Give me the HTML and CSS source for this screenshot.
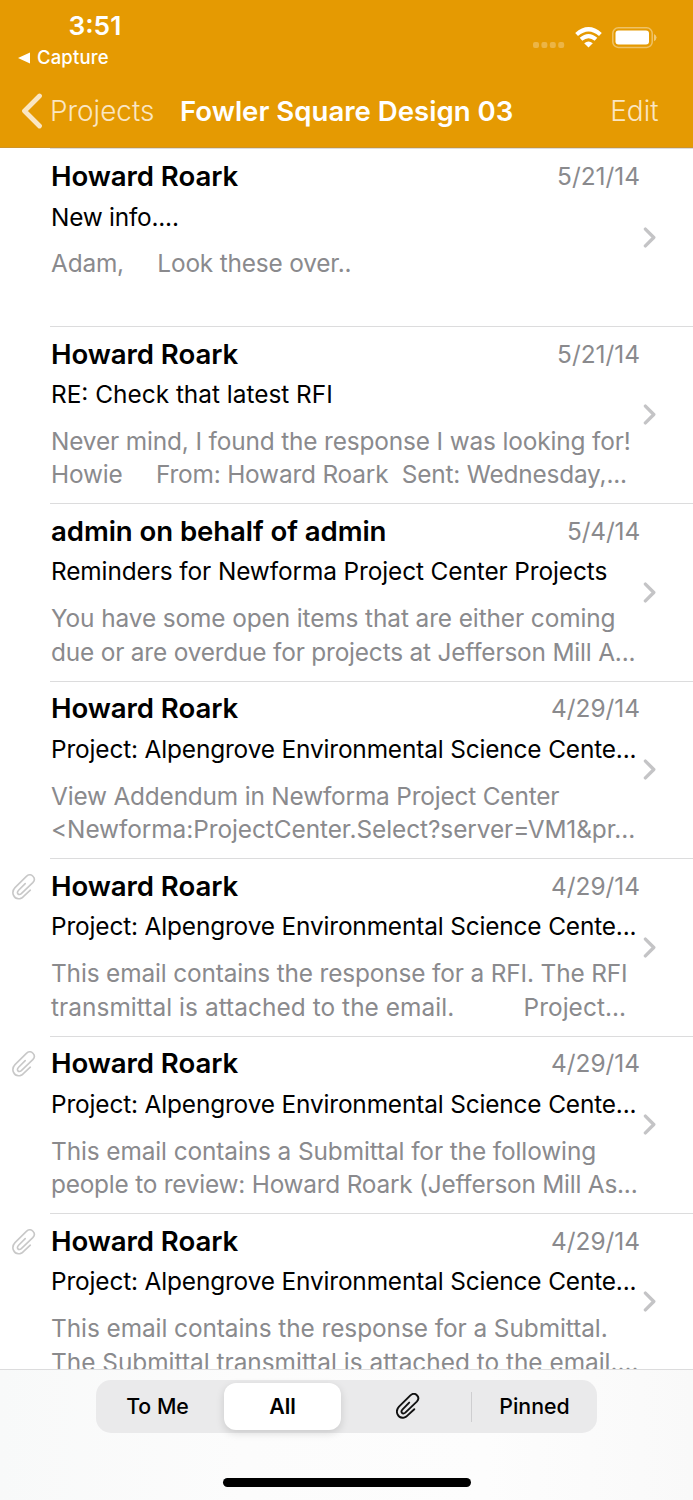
FILE: index.html
```
<!DOCTYPE html>
<html lang="en">
<head>
<meta charset="utf-8">
<title>Fowler Square Design 03</title>
<link rel="stylesheet" href="styles.css">
</head>
<body>
<svg width="0" height="0" class="defs">
  <symbol id="clip" viewBox="0 0 24 27"><path d="M13.200 9.600 6.600 16.300C4 19 6.600 22 9.300 19.600L20.800 8.600C25 4 19-1.800 14.400 2.400L3 13.600C-1.500 18.500 2 25.800 8 24.600 10 24.100 10.600 23.400 11.600 22.400L18.300 16.200" fill="none" stroke="currentColor" stroke-linecap="round" stroke-linejoin="round"/></symbol>
  <symbol id="chev" viewBox="0 0 13 22"><path d="M2.200 2.200 11 11 2.200 19.800" fill="none" stroke="currentColor" stroke-width="3.500" stroke-linecap="round" stroke-linejoin="round"/></symbol>
</svg>
<div class="phone">
  <header class="header">
    <div class="status">
      <div class="status-left">
        <div class="time">3:51</div>
        <div class="return"><svg width="12" height="12" viewBox="0 0 12 12"><path d="M0 6 12 .5v11z" fill="#fff"/></svg><span>Capture</span></div>
      </div>
      <div class="status-right">
        <svg class="cell" width="32" height="6" viewBox="0 0 32 6" fill="#fff" fill-opacity=".27"><rect width="6" height="6" rx="2"/><rect x="8.400" width="6" height="6" rx="2"/><rect x="16.800" width="6" height="6" rx="2"/><rect x="25.200" width="6" height="6" rx="2"/></svg>
        <svg class="wifi" width="27" height="21" viewBox="0 0 27 21"><path d="M1.600 7.500Q13.500-3 25.400 7.500" fill="none" stroke="#fff" stroke-width="4.200"/><path d="M6 12.300Q13.500 5.800 21 12.300" fill="none" stroke="#fff" stroke-width="4"/><path d="M13.500 20.600 9.200 16.300Q13.500 12.900 17.800 16.300Z" fill="#fff"/></svg>
        <svg class="battery" width="45" height="22" viewBox="0 0 45 22"><rect x=".8" y=".8" width="39.400" height="19.600" rx="5.500" fill="none" stroke="#fff" stroke-opacity=".4" stroke-width="1.500"/><rect x="3.500" y="3.500" width="33.500" height="14" rx="3" fill="#fff"/><path d="M42 7q2.500 1.200 2.500 3.600T42 14.200z" fill="#fff" fill-opacity=".45"/></svg>
      </div>
    </div>
    <nav class="nav">
      <svg class="back" width="22" height="36" viewBox="0 0 22 36"><path d="M18.500 3 3.500 18 18.500 33" fill="none" stroke="#fae6c3" stroke-width="4.800" stroke-linecap="round" stroke-linejoin="round"/></svg>
      <span class="nav-link projects">Projects</span>
      <h1 class="title">Fowler Square Design 03</h1>
      <span class="nav-link edit">Edit</span>
    </nav>
  </header>
  <main class="list">
    <article class="row"><div class="gutter"></div><div class="body"><div class="top"><h2 class="name">Howard Roark</h2><time class="date">5/21/14</time></div><p class="subject snug-5">New info....</p><p class="preview"><span class="snug-4">Adam,     Look these over..</span></p></div><svg class="chev"><use href="#chev"/></svg></article>
    <article class="row"><div class="gutter"></div><div class="body"><div class="top"><h2 class="name">Howard Roark</h2><time class="date">5/21/14</time></div><p class="subject">RE: Check that latest RFI</p><p class="preview"><span class="snug-3">Never mind, I found the response I was looking for!</span><span class="snug-4">Howie     From: Howard Roark  Sent: Wednesday,...</span></p></div><svg class="chev"><use href="#chev"/></svg></article>
    <article class="row"><div class="gutter"></div><div class="body"><div class="top"><h2 class="name">admin on behalf of admin</h2><time class="date short">5/4/14</time></div><p class="subject snug-2">Reminders for Newforma Project Center Projects</p><p class="preview"><span class="snug-2">You have some open items that are either coming</span><span class="snug-4">due or are overdue for projects at Jefferson Mill A...</span></p></div><svg class="chev"><use href="#chev"/></svg></article>
    <article class="row"><div class="gutter"></div><div class="body"><div class="top"><h2 class="name">Howard Roark</h2><time class="date">4/29/14</time></div><p class="subject snug-3">Project: Alpengrove Environmental Science Cente...</p><p class="preview"><span class="snug-4">View Addendum in Newforma Project Center</span><span class="snug-1">&lt;Newforma:ProjectCenter.Select?server=VM1&amp;pr...</span></p></div><svg class="chev"><use href="#chev"/></svg></article>
    <article class="row"><div class="gutter"><svg class="clip"><use href="#clip"/></svg></div><div class="body"><div class="top"><h2 class="name">Howard Roark</h2><time class="date">4/29/14</time></div><p class="subject snug-3">Project: Alpengrove Environmental Science Cente...</p><p class="preview"><span class="snug-3">This email contains the response for a RFI. The RFI</span><span class="loose">transmittal is attached to the email.          Project...</span></p></div><svg class="chev"><use href="#chev"/></svg></article>
    <article class="row"><div class="gutter"><svg class="clip"><use href="#clip"/></svg></div><div class="body"><div class="top"><h2 class="name">Howard Roark</h2><time class="date">4/29/14</time></div><p class="subject snug-3">Project: Alpengrove Environmental Science Cente...</p><p class="preview"><span class="snug-2">This email contains a Submittal for the following</span><span class="snug-5">people to review: Howard Roark (Jefferson Mill As...</span></p></div><svg class="chev"><use href="#chev"/></svg></article>
    <article class="row"><div class="gutter"><svg class="clip"><use href="#clip"/></svg></div><div class="body"><div class="top"><h2 class="name">Howard Roark</h2><time class="date">4/29/14</time></div><p class="subject snug-3">Project: Alpengrove Environmental Science Cente...</p><p class="preview"><span class="snug-1">This email contains the response for a Submittal.</span><span>The Submittal transmittal is attached to the email....</span></p></div><svg class="chev"><use href="#chev"/></svg></article>
  </main>
  <footer class="toolbar">
    <div class="segments">
      <button class="segment first">To Me</button>
      <button class="segment active">All</button>
      <button class="segment" aria-label="Attachments"><svg class="clip dark"><use href="#clip"/></svg></button>
      <button class="segment divided">Pinned</button>
    </div>
    <div class="home"></div>
  </footer>
</div>
</body>
</html>
```
FILE: styles.css
```
* { box-sizing: border-box; }
body { margin: 0; background: #fff; font-family: Inter, "Liberation Sans", sans-serif; color: #000; }
.defs { position: absolute; }
svg { display: block; flex: none; }
h1, h2, p { margin: 0; font-weight: 400; }
.phone { width: 693px; height: 1500px; display: flex; flex-direction: column; overflow: hidden; }

.header { height: 148px; flex: none; background: #e59a02; color: #fff; border-bottom: 1px solid #cf9428; }
.status { height: 74px; display: flex; justify-content: space-between; }
.status-left { padding-top: 9px; width: 200px; }
.time { padding-left: 68.500px; font-size: 26.300px; line-height: 34px; font-weight: 600; letter-spacing: 0; }
.return { display: flex; align-items: center; gap: 7px; padding-left: 18px; font-size: 18.500px; line-height: 29px; font-weight: 500; letter-spacing: .15px; }
.status-right { display: flex; padding: 27px 35px 0 0; }
.cell { margin: 15px 10px 0 0; }
.battery { margin: 0 1px 0 10.500px; }
.nav { display: flex; align-items: center; height: 74px; padding: 0 34.500px 0 21px; }
.nav-link { font-size: 27.900px; font-weight: 300; color: #fae6c3; white-space: nowrap; }
.projects { width: 130px; margin-left: 7px; }
.title { font-size: 27.600px; font-weight: 600; white-space: nowrap; flex: 1; }

.list { flex: 1; min-height: 0; overflow: hidden; padding-top: .4px; }
.row { position: relative; display: flex; height: 177.430px; padding-top: 10.700px; }
.row::before { content: ""; position: absolute; left: 50px; right: 0; top: 0; height: 1px; background: #dcdcdd; }
.gutter { width: 51px; flex: none; padding: 5.300px 0 0 11.500px; }
.clip { width: 24px; height: 27px; color: #c8c8c8; stroke-width: 1.600px; }
.clip.dark { color: #111; stroke-width: 1.900px; }
.body { width: 589px; flex: none; }
.top { display: flex; justify-content: space-between; height: 34px; line-height: 34px; }
.name { font-size: 27.600px; font-weight: 600; letter-spacing: -.08px; }
.date { font-size: 24.400px; color: #8a8a8d; }
.short { letter-spacing: -.15px; }
.subject { margin-top: 6.500px; font-size: 24.400px; line-height: 34px; white-space: pre; }
.preview { margin-top: 13.900px; font-size: 24.400px; line-height: 33.500px; color: #8a8a8d; white-space: pre; }
.preview span { display: block; }
.snug-1 { letter-spacing: -.065px; }
.snug-2 { letter-spacing: -.1px; }
.snug-3 { letter-spacing: -.145px; }
.snug-4 { letter-spacing: -.18px; }
.snug-5 { letter-spacing: -.22px; }
.loose { letter-spacing: .06px; }
.chev { width: 13px; height: 21px; margin: 67.800px 0 0 3px; color: #c4c4c6; }

.toolbar { height: 131px; flex: none; border-top: 1px solid #dcdcdd; background: linear-gradient(90deg, #f8f9f9, #fcfcfc 35%, #fdfdfd 70%, #f9f9f9); padding-top: 10px; display: flex; flex-direction: column; align-items: center; }
.segments { width: 501px; height: 53px; padding: 3px; display: grid; grid-template-columns: 122px 123px 127px 123px; border-radius: 15px; background: #eaeaeb; }
.segment { display: flex; align-items: center; justify-content: center; border: 0; padding: 0 0 1px; background: none; font: 500 21.300px Inter, sans-serif; color: #000; border-radius: 12px; position: relative; }
.first { padding-right: 5px; }
.active { background: #fff; margin: 0 3px; font-weight: 600; box-shadow: 0 3px 9px rgba(0,0,0,.14); }
.divided { padding-left: 4px; }
.divided::before { content: ""; position: absolute; left: 0; top: 9px; width: 1px; height: 30px; background: #ceced0; }
.home { width: 248px; height: 9px; margin-top: 44.700px; border-radius: 5px; background: #000; }
```
